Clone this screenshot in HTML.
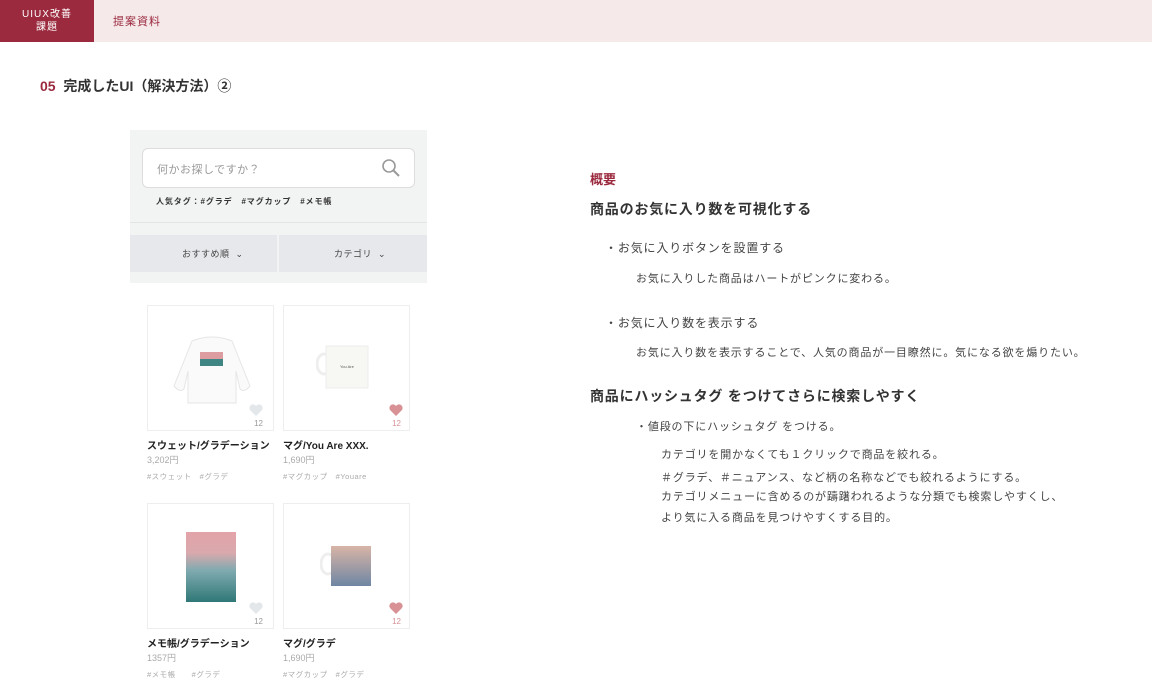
<!DOCTYPE html>
<html><head><meta charset="utf-8"><style>
*{margin:0;padding:0;box-sizing:border-box}
body{width:1152px;height:700px;background:#fff;font-family:"Liberation Sans","Noto Sans CJK JP",sans-serif;color:#333;position:relative;overflow:hidden}
.a{position:absolute;white-space:nowrap}
.hdr{position:absolute;left:0;top:0;width:1152px;height:42px;background:#f5e9ea}
.hb{position:absolute;left:0;top:0;width:94px;height:42px;background:#9b2a3e;color:#fff;font-size:10px;text-align:center;line-height:13px;padding-top:8px;letter-spacing:1px}
.card{position:absolute;width:127px;height:126px;border:1px solid #eee;background:#fff}
.nm{font-size:10px;font-weight:bold;color:#222}
.pr{font-size:9px;color:#aaa}
.tg{font-size:7.5px;color:#aaa;letter-spacing:.5px}
.cnt{font-size:8px;position:absolute;right:10px;bottom:2px}
.r{font-size:12px;color:#444;letter-spacing:.85px}
.s{font-size:11px;color:#444;letter-spacing:.85px}
.h{font-size:14px;font-weight:bold;color:#333;letter-spacing:.8px}
</style></head><body>
<div class="hdr"></div>
<div class="hb">UIUX改善<br>課題</div>
<div class="a" style="left:113px;top:13px;font-size:11px;color:#9b2a3e;letter-spacing:1px">提案資料</div>
<div class="a" style="left:40px;top:76px;font-size:14px;font-weight:bold;color:#333"><span style="color:#9b2a3e">05</span>&nbsp; 完成したUI（解決方法）②</div>

<div class="a" style="left:130px;top:130px;width:297px;height:153px;background:#f2f3f3"></div>
<div class="a" style="left:142px;top:148px;width:273px;height:40px;background:#fff;border:1px solid #ddd;border-radius:6px"></div>
<div class="a" style="left:157px;top:161px;font-size:11px;color:#999;letter-spacing:.5px">何かお探しですか？</div>
<svg class="a" style="left:381px;top:158px" width="20" height="20" viewBox="0 0 20 20"><circle cx="8" cy="8" r="6" fill="none" stroke="#999" stroke-width="1.6"/><line x1="12.5" y1="12.5" x2="18" y2="18" stroke="#999" stroke-width="2"/></svg>
<div class="a" style="left:156px;top:196px;font-size:8px;font-weight:bold;color:#333;letter-spacing:.9px">人気タグ：#グラデ　#マグカップ　#メモ帳</div>
<div class="a" style="left:130px;top:222px;width:297px;height:1px;background:#e4e4e4"></div>
<div class="a" style="left:130px;top:235px;width:147px;height:37px;background:#e6e8eb"></div>
<div class="a" style="left:279px;top:235px;width:148px;height:37px;background:#e6e8eb"></div>
<div class="a" style="left:182px;top:247px;font-size:9px;color:#444;letter-spacing:.5px">おすすめ順 &nbsp;⌄</div>
<div class="a" style="left:334px;top:247px;font-size:9px;color:#444;letter-spacing:.5px">カテゴリ &nbsp;⌄</div>

<div class="card" style="left:147px;top:305px">
<svg style="position:absolute;left:22px;top:25px" width="84" height="75" viewBox="0 0 84 75"><path d="M22 10 Q42 2 62 10 L80 55 Q74 62 70 58 L66 40 L66 72 L18 72 L18 40 L14 58 Q10 62 4 55 Z" fill="#fafafa" stroke="#e6e6e6"/><rect x="30" y="21" width="23" height="14" fill="#3f8584"/><rect x="30" y="21" width="23" height="7" fill="#dd9c9f"/></svg>
<svg style="position:absolute;right:10px;bottom:14px" width="14" height="12" viewBox="0 0 14 12"><path d="M7 12 L1 6 A3.2 3.2 0 0 1 7 2 A3.2 3.2 0 0 1 13 6 Z" fill="#e4e7ea"/></svg>
<div class="cnt" style="color:#999">12</div></div>
<div class="card" style="left:283px;top:305px">
<svg style="position:absolute;left:32px;top:38px" width="55" height="46" viewBox="0 0 55 46"><ellipse cx="8" cy="20" rx="7" ry="10" fill="none" stroke="#eee" stroke-width="3"/><rect x="10" y="2" width="42" height="42" fill="#f7f7f3" stroke="#eee"/><text x="24" y="24" font-size="4" fill="#555">You Are</text></svg>
<svg style="position:absolute;right:6px;bottom:14px" width="14" height="12" viewBox="0 0 14 12"><path d="M7 12 L1 6 A3.2 3.2 0 0 1 7 2 A3.2 3.2 0 0 1 13 6 Z" fill="#d89195"/></svg>
<div class="cnt" style="color:#d89195;right:8px">12</div></div>
<div class="a nm" style="left:147px;top:437px">スウェット/グラデーション</div>
<div class="a pr" style="left:147px;top:453px">3,202円</div>
<div class="a tg" style="left:147px;top:471px">#スウェット　#グラデ</div>
<div class="a nm" style="left:283px;top:437px">マグ/You Are XXX.</div>
<div class="a pr" style="left:283px;top:453px">1,690円</div>
<div class="a tg" style="left:283px;top:471px">#マグカップ　#Youare</div>

<div class="card" style="left:147px;top:503px">
<div style="position:absolute;left:38px;top:28px;width:50px;height:70px;background:linear-gradient(#e3a3a8 0%,#d9a9ad 30%,#7faab0 55%,#2f7877 100%)"></div>
<svg style="position:absolute;right:10px;bottom:14px" width="14" height="12" viewBox="0 0 14 12"><path d="M7 12 L1 6 A3.2 3.2 0 0 1 7 2 A3.2 3.2 0 0 1 13 6 Z" fill="#e4e7ea"/></svg>
<div class="cnt" style="color:#999">12</div></div>
<div class="card" style="left:283px;top:503px">
<svg style="position:absolute;left:36px;top:40px" width="52" height="45" viewBox="0 0 52 45"><ellipse cx="8" cy="20" rx="7" ry="10" fill="none" stroke="#eee" stroke-width="3"/><defs><linearGradient id="g" x1="0" y1="0" x2="0" y2="1"><stop offset="0" stop-color="#d8b5a6"/><stop offset="1" stop-color="#6e86a3"/></linearGradient></defs><rect x="11" y="2" width="40" height="40" fill="url(#g)"/></svg>
<svg style="position:absolute;right:6px;bottom:14px" width="14" height="12" viewBox="0 0 14 12"><path d="M7 12 L1 6 A3.2 3.2 0 0 1 7 2 A3.2 3.2 0 0 1 13 6 Z" fill="#d89195"/></svg>
<div class="cnt" style="color:#d89195;right:8px">12</div></div>
<div class="a nm" style="left:147px;top:635px">メモ帳/グラデーション</div>
<div class="a pr" style="left:147px;top:651px">1357円</div>
<div class="a tg" style="left:147px;top:669px">#メモ帳　　#グラデ</div>
<div class="a nm" style="left:283px;top:635px">マグ/グラデ</div>
<div class="a pr" style="left:283px;top:651px">1,690円</div>
<div class="a tg" style="left:283px;top:669px">#マグカップ　#グラデ</div>

<div class="a" style="left:590px;top:169px;font-size:13px;font-weight:bold;color:#9b2a3e">概要</div>
<div class="a h" style="left:590px;top:199px">商品のお気に入り数を可視化する</div>
<div class="a r" style="left:605px;top:239px">・お気に入りボタンを設置する</div>
<div class="a s" style="left:636px;top:270px">お気に入りした商品はハートがピンクに変わる。</div>
<div class="a r" style="left:605px;top:314px">・お気に入り数を表示する</div>
<div class="a s" style="left:636px;top:344px">お気に入り数を表示することで、人気の商品が一目瞭然に。気になる欲を煽りたい。</div>
<div class="a h" style="left:590px;top:386px">商品にハッシュタグ をつけてさらに検索しやすく</div>
<div class="a s" style="left:636px;top:418px">・値段の下にハッシュタグ をつける。</div>
<div class="a s" style="left:661px;top:446px">カテゴリを開かなくても１クリックで商品を絞れる。</div>
<div class="a s" style="left:661px;top:469px">＃グラデ、＃ニュアンス、など柄の名称などでも絞れるようにする。</div>
<div class="a s" style="left:661px;top:488px">カテゴリメニューに含めるのが躊躇われるような分類でも検索しやすくし、</div>
<div class="a s" style="left:661px;top:509px">より気に入る商品を見つけやすくする目的。</div>
</body></html>
